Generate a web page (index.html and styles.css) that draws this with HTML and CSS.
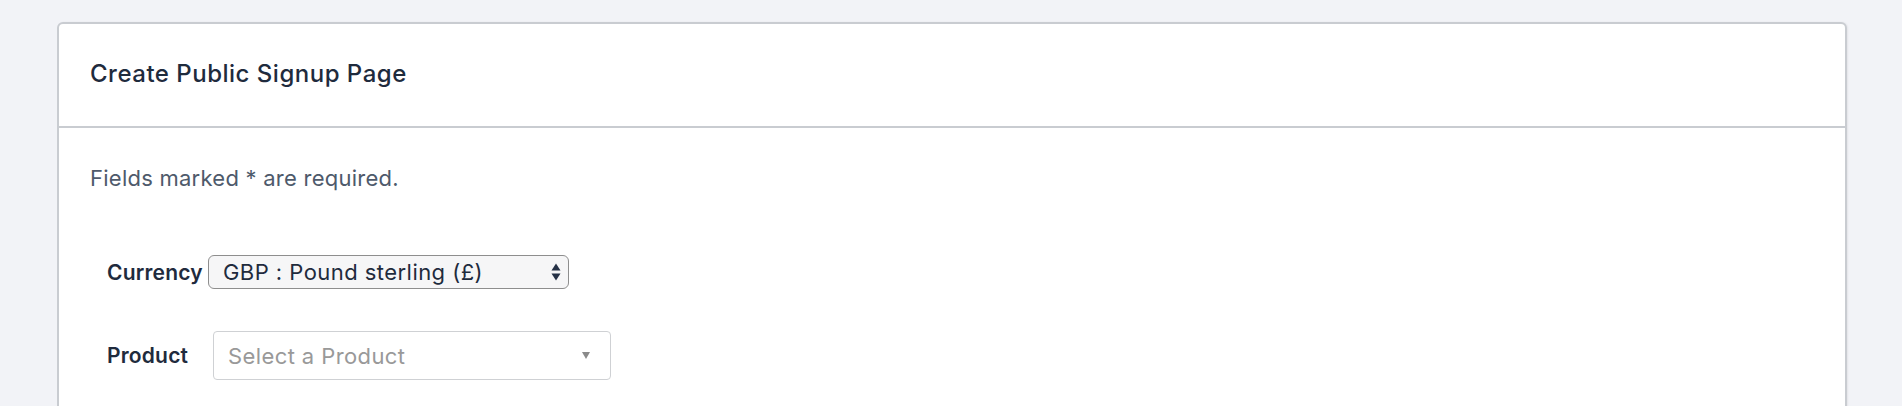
FILE: index.html
```html
<!DOCTYPE html>
<html lang="en">
<head>
<meta charset="utf-8">
<title>Create Public Signup Page</title>
<link rel="stylesheet" href="styles.css">
</head>
<body>
<div class="page">
  <section class="card">
    <header class="card-header">
      <h1 class="card-title">Create Public Signup Page</h1>
    </header>
    <div class="card-body">
      <p class="note">Fields marked * are required.</p>
      <form class="form">
        <div class="row row-currency">
          <label class="label">Currency</label>
          <div class="native-select">
            <span class="native-value">GBP : Pound sterling (£)</span>
            <svg class="updown" width="10" height="18" viewBox="0 0 10 18"><path d="M0.5 7.5 L5 0.5 L9.5 7.5 Z" fill="#253146"/><path d="M0.5 10.5 L5 17.5 L9.5 10.5 Z" fill="#253146"/></svg>
          </div>
        </div>
        <div class="row row-product">
          <label class="label">Product</label>
          <div class="chosen-select">
            <span class="placeholder">Select a Product</span>
            <svg class="caret" width="8" height="7" viewBox="0 0 8 7"><path d="M0 0 L8 0 L4 7 Z" fill="#8a8a8a"/></svg>
          </div>
        </div>
      </form>
    </div>
  </section>
</div>
</body>
</html>
```
FILE: styles.css
```css
html, body {
  margin: 0;
  padding: 0;
}
body {
  background: #f2f3f7;
  font-family: "Inter", "Liberation Sans", sans-serif;
  color: #1f2b3d;
}
.page {
  padding: 22px 55px 0 57px;
}
.card {
  background: #ffffff;
  border: 2px solid #c9ccd1;
  border-radius: 6px;
  box-shadow: 1px 0 2px rgba(0, 0, 0, 0.06);
  min-height: 420px;
}
.card-header {
  height: 102px;
  box-sizing: border-box;
  border-bottom: 2px solid #c9ccd1;
  display: flex;
  align-items: center;
  padding: 0 31px 4px;
  height: 104px;
}
.card-title {
  margin: 0;
  font-size: 24px;
  font-weight: 500;
  letter-spacing: 0.5px;
  color: #1f2b3d;
}
.card-body {
  padding: 35px 31px 0;
}
.note {
  margin: 0;
  font-size: 22px;
  line-height: 30px;
  letter-spacing: 0.25px;
  color: #4e5a6b;
}
.form {
  padding: 62px 0 0 17px;
  display: flex;
  flex-direction: column;
  gap: 42px;
}
.row {
  display: flex;
  align-items: center;
}
.label {
  font-size: 21px;
  font-weight: 600;
  letter-spacing: 0.2px;
  color: #1f2b3d;
}
.row-currency .label {
  width: 101px;
}
.row-product .label {
  width: 106px;
}
.native-select {
  width: 361px;
  height: 34px;
  box-sizing: border-box;
  border: 1px solid #8e8e8e;
  border-radius: 6px;
  background: #f6f6f7;
  display: flex;
  align-items: center;
  justify-content: space-between;
  padding: 0 7px 0 14px;
}
.native-value {
  font-size: 22px;
  letter-spacing: 0.45px;
  color: #1f2b3d;
}
.chosen-select {
  width: 398px;
  height: 49px;
  box-sizing: border-box;
  border: 1px solid #cfd1d4;
  border-radius: 4px;
  background: #ffffff;
  display: flex;
  align-items: center;
  justify-content: space-between;
  padding: 0 20px 0 14px;
}
.placeholder {
  font-size: 22px;
  letter-spacing: 0.4px;
  color: #999999;
}
```
